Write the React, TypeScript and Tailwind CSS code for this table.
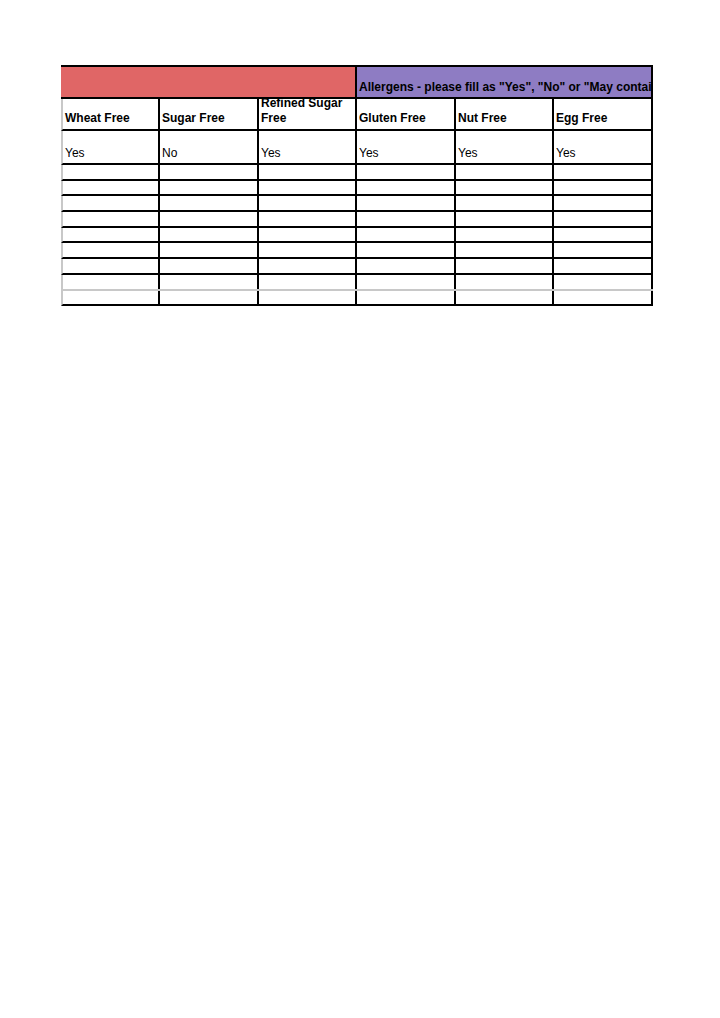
import React from "react";

const widths = ["w-[97px]", "w-[99px]", "w-[98px]", "w-[99px]", "w-[98px]", "w-[99px]"];
const headers = ["Wheat Free", "Sugar Free", "Refined Sugar Free", "Gluten Free", "Nut Free", "Egg Free"];
const values = ["Yes", "No", "Yes", "Yes", "Yes", "Yes"];
// empty row heights (incl. 2px bottom border)
const blankRows = ["h-[16px]", "h-[15px]", "h-[16px]", "h-[16px]", "h-[15px]", "h-[16px]", "h-[16px]", "h-[16px]", "h-[15px]"];

export default function App() {
  return (
    <div className="min-h-[1018px] w-[720px] bg-white pt-[65px] pl-[61px] text-black" style={{ fontFamily: '"Liberation Sans", Arial, sans-serif' }}>
      <div className="w-[592px] border-t-2 border-black">
        {/* banner */}
        <div className="flex h-[32px] border-b-2 border-black">
          <div className="w-[296px] shrink-0 border-r-2 border-black bg-[#e06666]" />
          <div className="flex w-[296px] shrink-0 items-end overflow-hidden whitespace-nowrap border-r-2 border-black bg-[#8e7cc3] pb-[2px] pl-[2px] text-[12px] font-bold leading-[15px]">
            Allergens - please fill as "Yes", "No" or "May contain"
          </div>
        </div>

        {/* headers */}
        <div className="flex h-[32px] border-b-2 border-l-2 border-b-black border-l-[#c8c8c8]">
          {headers.map((h, i) => (
            <div key={h} className={`${widths[i]} flex shrink-0 items-end overflow-hidden border-r-2 border-black pb-[3px] pl-[2px] text-[12px] font-bold leading-[15px]`}>
              <span>{h}</span>
            </div>
          ))}
        </div>

        {/* values */}
        <div className="flex h-[34px] border-b-2 border-l-2 border-b-black border-l-[#c8c8c8]">
          {values.map((v, i) => (
            <div key={i} className={`${widths[i]} flex shrink-0 items-end border-r-2 border-black pb-[2px] pl-[2px] text-[12px] leading-[15px]`}>
              {v}
            </div>
          ))}
        </div>

        {/* empty rows */}
        {blankRows.map((h, r) => (
          <div key={r} className={`${h} flex border-b-2 border-l-2 border-l-[#c8c8c8] ${r === 7 ? "border-b-[#c8c8c8]" : "border-b-black"}`}>
            {widths.map((w, i) => (
              <div key={i} className={`${w} shrink-0 border-r-2 border-black`} />
            ))}
          </div>
        ))}
      </div>
    </div>
  );
}
